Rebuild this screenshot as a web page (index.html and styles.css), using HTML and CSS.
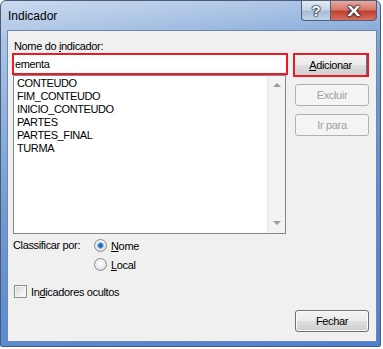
FILE: index.html
```html
<!DOCTYPE html>
<html lang="pt">
<head>
  <meta charset="UTF-8">
  <title>Indicador</title>
  <link rel="stylesheet" href="styles.css">
</head>
<body>
  <div class="janela">
    <div class="barra-titulo">
      <span class="titulo">Indicador</span>
      <div class="botoes-titulo">
        <span class="btn-ajuda">?</span>
        <span class="btn-fechar"><span class="xis">X</span></span>
      </div>
    </div>

    <div class="cliente">
      <div class="coluna-esq">
        <label class="rotulo">Nome do <u>i</u>ndicador:</label>
        <div class="campo">ementa</div>

        <div class="lista">
          <ul class="itens">
            <li>CONTEUDO</li>
            <li>FIM_CONTEUDO</li>
            <li>INICIO_CONTEUDO</li>
            <li>PARTES</li>
            <li>PARTES_FINAL</li>
            <li>TURMA</li>
          </ul>
          <div class="rolagem">
            <span class="seta cima"></span>
            <span class="seta baixo"></span>
          </div>
        </div>

        <div class="classificar">
          <span class="rotulo-class">Classificar por:</span>
          <div class="opcoes">
            <div class="opcao"><span class="radio marcado"></span><span><u>N</u>ome</span></div>
            <div class="opcao"><span class="radio"></span><span><u>L</u>ocal</span></div>
          </div>
        </div>

        <div class="ocultos"><span class="caixa"></span><span>In<u>d</u>icadores ocultos</span></div>
      </div>

      <div class="coluna-dir">
        <div class="destaque"><button class="botao padrao"><u>A</u>dicionar</button></div>
        <button class="botao" disabled>Excluir</button>
        <button class="botao" disabled>Ir para</button>
        <button class="botao fechar">Fechar</button>
      </div>
    </div>
  </div>
</body>
</html>
```

FILE: styles.css
```css
body {
  margin: 0;
  background-color: #fff;
  font-family: "Liberation Sans", Arial, sans-serif;
  font-size: 11px;
  color: #000;
}

.janela {
  width: 381px;
  height: 347px;
  box-sizing: border-box;
  border: 1px solid #4a5d78;
  border-radius: 6px 6px 2px 2px;
  display: flex;
  flex-direction: column;
  background:
    linear-gradient(to bottom, rgba(255,255,255,0.25), rgba(255,255,255,0) 40px),
    linear-gradient(160deg, #b9cee9 0%, #8fb0dc 25%, #7199d1 45%, #5b8bd2 70%, #4d80d0 100%);
}

.barra-titulo {
  height: 29px;
  display: flex;
  justify-content: space-between;
  align-items: flex-start;
  padding: 0 3px 0 7px;
}

.titulo {
  margin-top: 8px;
  font-size: 12px;
  line-height: 14px;
}

.botoes-titulo {
  display: flex;
  margin-top: -1px;
}

.btn-ajuda,
.btn-fechar {
  height: 21px;
  box-sizing: border-box;
  border: 1px solid #4f5f78;
  display: flex;
  align-items: center;
  justify-content: center;
  color: #fff;
  font-weight: bold;
  text-shadow: 0 0 1px #1f2838, 0 0 1px #1f2838, 0 0 2px #1f2838, 0 0 2px #1f2838;
}

.btn-ajuda {
  width: 29px;
  border-right: none;
  border-radius: 0 0 0 4px;
  font-size: 15px;
  background: linear-gradient(to bottom, #e3ebf5 0%, #c9d6e8 45%, #a9bcd6 55%, #c3d3e8 100%);
}

.btn-fechar {
  width: 47px;
  border-radius: 0 0 4px 0;
  font-size: 14px;
  background: linear-gradient(to bottom, #e8aaa0 0%, #d6796c 45%, #c2412f 55%, #d7705f 100%);
}

.xis {
  display: inline-block;
  transform: scaleX(1.4);
}

.cliente {
  flex: 1;
  margin: 0 3px 4px 6px;
  border: 1px solid #6d87ad;
  background-color: #f0f0f0;
  display: flex;
  gap: 5px;
  padding: 8px 7px 9px 4px;
  letter-spacing: -0.35px;
}

.coluna-esq {
  width: 276px;
  display: flex;
  flex-direction: column;
}

.rotulo {
  display: block;
  height: 14px;
  line-height: 14px;
  padding-left: 2px;
}

.campo {
  height: 22px;
  box-sizing: border-box;
  border: 2px solid #ed1c24;
  background-color: #fff;
  line-height: 18px;
  padding-left: 1px;
}

.lista {
  width: 273px;
  height: 159px;
  box-sizing: border-box;
  margin-left: 1px;
  border: 1px solid #828790;
  background-color: #fff;
  display: flex;
}

.itens {
  flex: 1;
  list-style: none;
  margin: 0;
  padding: 1px 0 0 3px;
  letter-spacing: -0.4px;
}

.itens li {
  line-height: 13px;
}

.rolagem {
  width: 17px;
  background-color: #f3f3f3;
  border-left: 1px solid #e6e6e6;
  display: flex;
  flex-direction: column;
  justify-content: space-between;
  align-items: center;
  padding: 7px 0 8px;
}

.seta {
  width: 0;
  height: 0;
  border-left: 4px solid transparent;
  border-right: 4px solid transparent;
}

.seta.cima {
  border-bottom: 4px solid #9a9a9a;
}

.seta.baixo {
  border-top: 4px solid #9a9a9a;
}

.classificar {
  display: flex;
  margin-top: 5px;
}

.rotulo-class {
  width: 81px;
  padding-left: 1px;
  line-height: 13px;
}

.opcoes {
  display: flex;
  flex-direction: column;
  gap: 6px;
}

.opcao {
  display: flex;
  align-items: center;
  gap: 4px;
  height: 13px;
}

.radio {
  width: 13px;
  height: 13px;
  box-sizing: border-box;
  border-radius: 50%;
  border: 1px solid #8b8b8b;
  background: radial-gradient(circle at 50% 40%, #ffffff 0%, #f0f0f0 45%, #d0d0d0 100%);
}

.radio.marcado {
  background:
    radial-gradient(circle at 50% 50%, #1a4f98 0%, #3a7fcc 2px, #7ab8ec 3px, rgba(0,0,0,0) 3.5px),
    radial-gradient(circle at 50% 40%, #ffffff 0%, #e8e8e8 60%, #c8c8c8 100%);
}

.ocultos {
  display: flex;
  align-items: center;
  gap: 4px;
  margin: 14px 0 0 2px;
  height: 13px;
}

.caixa {
  width: 13px;
  height: 13px;
  box-sizing: border-box;
  border: 1px solid #8e8f8f;
  background: linear-gradient(135deg, #d2d2d2 0%, #f0f0f0 60%, #fbfbfb 100%);
  box-shadow: inset 0 0 0 1px #f4f4f4;
}

.coluna-dir {
  width: 76px;
  display: flex;
  flex-direction: column;
  padding-top: 14px;
}

.botao {
  width: 74px;
  height: 22px;
  margin: 7px 0 0 2px;
  padding: 0;
  box-sizing: border-box;
  border: 1px solid #707070;
  border-radius: 3px;
  font-family: "Liberation Sans", Arial, sans-serif;
  font-size: 11px;
  letter-spacing: -0.35px;
  color: #000;
  background: linear-gradient(to bottom, #f2f2f2 0%, #ebebeb 48%, #dddddd 52%, #cfcfcf 100%);
  box-shadow: inset 0 0 0 1px #fbfbfb;
}

.botao[disabled] {
  border-color: #adb2b5;
  background: #f4f4f4;
  box-shadow: none;
  color: #a0a0a0;
}

.botao + .botao {
  margin-top: 8px;
}

.destaque {
  width: 76px;
  height: 24px;
  box-sizing: border-box;
  border: 2px solid #ed1c24;
}

.destaque .botao.padrao {
  width: 72px;
  height: 20px;
  margin: 0;
  border: none;
  border-right: 1px solid #3c7fb1;
  border-radius: 0;
  box-shadow: inset 0 1px 0 #fbfbfb;
}

.botao.fechar {
  margin-top: auto;
}
```
